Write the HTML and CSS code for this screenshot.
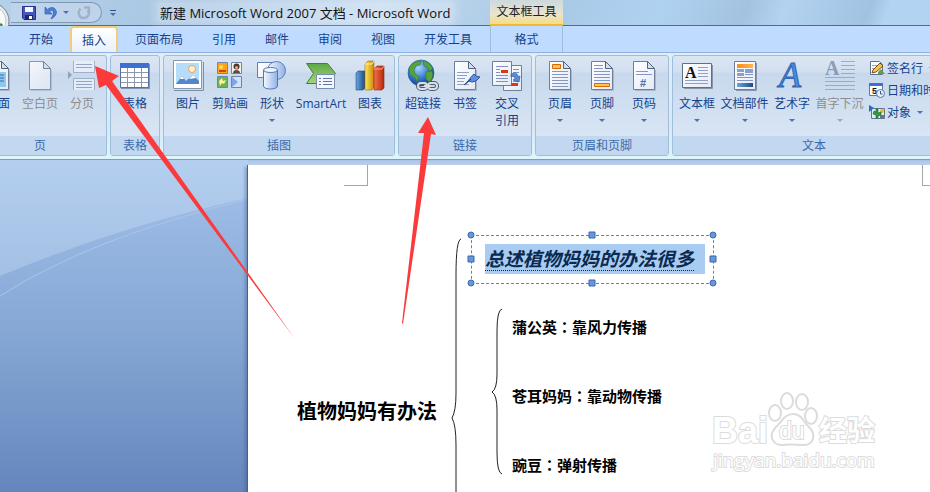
FILE: index.html
```html
<!DOCTYPE html>
<html lang="zh-CN">
  <head>
    <title>新建 Microsoft Word 2007 文档 - Microsoft Word</title>
    <meta charset="UTF-8">
    <meta name="viewport" content="width=device-width,initial-scale=1.0">
    <link rel="stylesheet" href="styles.css">
  </head>

  <body>
    <!-- shared gradients and page shapes for the ribbon icons -->
    <svg class="defs" width="0" height="0" aria-hidden="true">
      <defs>
        <linearGradient id="paper" x1="0" y1="0" x2="1" y2="1"><stop offset="0" stop-color="#fff"/><stop offset="1" stop-color="#e3e9f5"/></linearGradient>
        <linearGradient id="glass" x1="0" y1="0" x2="1" y2="0"><stop offset="0" stop-color="#f4f8ff"/><stop offset="1" stop-color="#8fb2e6"/></linearGradient>
        <linearGradient id="green" x1="0" y1="0" x2="0" y2="1"><stop offset="0" stop-color="#5da845"/><stop offset="1" stop-color="#a5d67c"/></linearGradient>
        <linearGradient id="gold" x1="0" y1="0" x2="1" y2="0"><stop offset="0" stop-color="#ffe65a"/><stop offset="1" stop-color="#c98a00"/></linearGradient>
        <linearGradient id="blue" x1="0" y1="0" x2="1" y2="0"><stop offset="0" stop-color="#6aa7e0"/><stop offset="1" stop-color="#1e4a85"/></linearGradient>
        <linearGradient id="red" x1="0" y1="0" x2="1" y2="0"><stop offset="0" stop-color="#f4704a"/><stop offset="1" stop-color="#b42a0c"/></linearGradient>
        <linearGradient id="orange" x1="0" y1="0" x2="1" y2="0"><stop offset="0" stop-color="#ff8a1c"/><stop offset="1" stop-color="#ffb74a"/></linearGradient>
        <radialGradient id="sea" cx=".4" cy=".3" r=".7"><stop offset="0" stop-color="#a9d8fb"/><stop offset=".6" stop-color="#3277d0"/><stop offset="1" stop-color="#123f8c"/></radialGradient>
        <symbol id="page" viewBox="0 0 32 32">
          <path d="M7 30.5h20.500V10" fill="none" stroke="#8fa0b8" opacity=".6"/>
          <path d="M5.500 1.500h14l7 7v21h-21z" fill="url(#paper)" stroke="#6d7f99"/>
          <path d="M19.500 1.500v7h7z" fill="#d4deee" stroke="#50627c"/>
        </symbol>
      </defs>
    </svg>

    <header class="header">
      <div class="titlebar">
        <svg class="orb" width="11" height="26" viewBox="0 0 11 26"><circle cx="-9" cy="21" r="18" fill="#e7ebef" stroke="#77828f"/><circle cx="-9" cy="21" r="15" fill="#f8f9fa" stroke="#c1c8d0"/><path d="M-2 24h4v7h-4z" fill="#5ca52e" stroke="#38761b"/></svg>
        <div class="qat">
          <button aria-label="保存"><svg width="14" height="14" viewBox="0 0 14 14"><path d="M.5.5h13v13H2L.5 12z" fill="#4557b8" stroke="#27318b"/><path d="M3 1h8v5H3z" fill="#f3f7ff"/><path d="M3 9h8v5H3z" fill="#20286c"/><path d="M7 10h3v3H7z" fill="#fff"/></svg></button>
          <button aria-label="撤消"><svg width="14" height="14" viewBox="0 0 14 14"><path d="M1 1v7h7L5.500 5.500C9 3 11 6 8 11l-1 2c6-3 7-8 3-11C7.500 1 5 2 3.500 3.500z" fill="#4c7fd6" stroke="#2f5fb5" stroke-width=".7"/></svg></button>
          <i class="caret"></i>
          <button class="redo" aria-label="恢复"><svg width="14" height="14" viewBox="0 0 14 14"><path d="M3.500 2.500C-.5 7 3 12.500 7 12c5-.5 6-5 3.500-8M7 1.500h5V7" fill="none" stroke="#94a5bc" stroke-width="2.400"/></svg></button>
        </div>
        <button class="more" aria-label="自定义快速访问工具栏"><i class="caret"></i></button>
        <div class="title">新建 Microsoft Word 2007 文档 - Microsoft Word</div>
      </div>
      <div class="context-title">文本框工具</div>
      <nav class="tabs">
        <button>开始</button>
        <button class="active">插入</button>
        <button>页面布局</button>
        <button>引用</button>
        <button>邮件</button>
        <button>审阅</button>
        <button>视图</button>
        <button>开发工具</button>
      </nav>
      <button class="context-tab">格式</button>
    </header>

    <main class="ribbon">
      <section class="group first">
        <div class="tools">
          <button class="tool"><svg width="32" height="32"><use href="#page"/><path d="M8 12h16v15H8z" fill="#8cc8f0"/><path d="M10 15h12M10 18h12M10 21h12" stroke="#3d6ea8"/></svg>封面</button>
          <button class="tool disabled" disabled><svg width="32" height="32"><use href="#page"/></svg>空白页</button>
          <button class="tool disabled" disabled><svg width="32" height="32"><path d="M2 11l4 4-4 4z" fill="#7e90ab"/><path d="M7.500 1v11.500h21V1M7.500 30V18.500h21V30" fill="#edf2fb" stroke="#8fa2bf"/><path d="M10 4.500h16M10 7.500h16M10 21.500h16M10 24.500h16M10 27.500h16" stroke="#8292bd"/></svg>分页</button>
        </div>
        <h2>页</h2>
      </section>

      <section class="group">
        <div class="tools">
          <button class="tool"><svg width="32" height="32"><path d="M2 4h29v25H2z" fill="#8396b5"/><path d="M1.500 3.500h28v24h-28z" fill="#fff" stroke="#56709e"/><path d="M1 3h29v5H1z" fill="#3f6fd1"/><path d="M2 12.500h27M2 17.500h27M2 22.500h27M8.500 8v19M15.500 8v19M22.500 8v19" stroke="#8b98ad"/></svg>表格</button>
        </div>
        <h2>表格</h2>
      </section>

      <section class="group">
        <div class="tools">
          <button class="tool"><svg width="32" height="32"><path d="M2 30.500h29.500V2" fill="none" stroke="#7d8da6"/><path d="M1.500.500h28v28h-28z" fill="#fff" stroke="#8597b1"/><path d="M4 3h23v21H4z" fill="#b5dcf8"/><circle cx="20" cy="9" r="3.500" fill="#fff2d0" stroke="#f5a04b"/><path d="M4 24l6-8 4 5 7-6 6 6v3z" fill="#5585c9"/><path d="M8 19l2-3 2 3zM17 19l4-4 3 3z" fill="#fff"/></svg>图片</button>
          <button class="tool"><svg width="32" height="32"><g stroke="#7185a8"><path d="M3.500 2.500h10v11h-10z" fill="#fba51d"/><path d="M17.500 2.500h10v11h-10z" fill="#f2f2f2"/><path d="M3.500 16.500h10v11h-10z" fill="#69b45b"/><path d="M17.500 16.500h10v11h-10z" fill="#d3e1fa"/></g><path d="M5 10h7v2H5z" fill="#d3420e"/><circle cx="7" cy="7" r="2" fill="#ffe15b"/><circle cx="22.500" cy="6.500" r="3" fill="#4c3528"/><circle cx="22.500" cy="7.500" r="1.500" fill="#e5b089"/><path d="M19 13c0-4 7-4 7 0z" fill="#4b4b4b"/><path d="M22 10l1 3 1-3z" fill="#c42"/><path d="M5 21l3-3 1 3 3-1-2 4-2-1-2 3z" fill="#fff39a"/><path d="M18 17l6 5-6 5z" fill="#7ea4e9"/></svg>剪贴画</button>
          <button class="tool"><svg width="32" height="32"><path d="M1.500 2.500h20v15h-20z" fill="url(#paper)" stroke="#5e7fb2"/><circle cx="20.500" cy="10.500" r="9" fill="url(#glass)" stroke="#5e7fb2"/><path d="M7.500 10v16c0 4 14 4 14 0V10" fill="url(#glass)" stroke="#5377b0"/><ellipse cx="14.500" cy="10" rx="7" ry="2.500" fill="#eef5ff" stroke="#5377b0"/></svg>形状<i class="caret"></i></button>
          <button class="tool smartart"><svg width="32" height="32"><path d="M1.500 3.500h21l8 10-8 10h-21l7-10z" fill="url(#green)" stroke="#3e8236"/><path d="M11.500 14.500h18v14h-18z" fill="#f3f6fd" stroke="#7a8dac"/><path d="M18 18.500h9M18 21.500h9M18 24.500h9M14 18.500h2M14 21.500h2M14 24.500h2" stroke="#6076a9"/></svg>SmartArt</button>
          <button class="tool"><svg width="32" height="32"><path d="M2 13l2-2h7v17l-2 2H2z" fill="url(#blue)" stroke="#204d80" stroke-width=".6"/><path d="M11 4l3-3h6v26l-2 3h-7z" fill="url(#gold)" stroke="#9b6c00" stroke-width=".6"/><path d="M20 9l3-3h7v22l-2 2h-8z" fill="url(#red)" stroke="#8c2208" stroke-width=".6"/><path d="M11 4h7l2-3" fill="none" stroke="#fff29a"/><path d="M20 9h8l2-3" fill="none" stroke="#ffa287"/></svg>图表</button>
        </div>
        <h2>插图</h2>
      </section>

      <section class="group">
        <div class="tools">
          <button class="tool"><svg width="32" height="32"><circle cx="14" cy="13" r="13" fill="url(#sea)" stroke="#26558f" stroke-width=".6"/><path d="M2 8c3-6 8-7 12-7l-1 4-4 1-2 4 1 4 4 3-2 5-2-4-5-4zM16 1c4 0 8 3 10 8l-4 2-2-4-3-1zM19 12l6-1c2 5 0 9-3 11l-3-3z" fill="#55a33c" stroke="#2c7233" stroke-width=".5"/><g fill="none" stroke="#4c5b6c" stroke-width="4"><rect x="11" y="23" width="9" height="6" rx="3"/><rect x="21" y="23" width="9" height="6" rx="3"/></g><g fill="none" stroke="#d9e0e9" stroke-width="2"><rect x="11" y="23" width="9" height="6" rx="3"/><rect x="21" y="23" width="9" height="6" rx="3"/><path d="M17 26h7"/></g></svg>超链接</button>
          <button class="tool"><svg width="32" height="32"><use href="#page"/><path d="M8 12.500h12M8 15.500h10M8 18.500h8M8 21.500h7M8 24.500h12" stroke="#8da0c8"/><path d="M16 24c5-4 5-7 9-10l2 2 4 1-4 4-4 1-3-1z" fill="#5e8fdd" stroke="#30569d"/><path d="M15 25l7-6" stroke="#233e70"/></svg>书签</button>
          <button class="tool"><svg width="32" height="32"><path d="M12.500 5.500h18v25h-18z" fill="url(#paper)" stroke="#6d7f99"/><path d="M22 9.500h6M22 12.500h6M22 21.500h6" stroke="#7d91c3"/><path d="M1.500 1.500h19v24h-19z" fill="url(#paper)" stroke="#6d7f99"/><path d="M5 6.500h12M5 9.500h4M5 12.500h4M5 15.500h12M5 18.500h12M5 21.500h12" stroke="#7d91c3"/><path d="M10 10h7v3h-7zM20 23h7v3h-7z" fill="#dc3912"/><path d="M20 14c5-2 7 0 7 3l2-1-1 6-6-2 2-1c0-3-2-3-4-2z" fill="#5a8be0" stroke="#2e5aa6" stroke-width=".7"/></svg>交叉<br>引用</button>
        </div>
        <h2>链接</h2>
      </section>

      <section class="group">
        <div class="tools">
          <button class="tool"><svg width="32" height="32"><use href="#page"/><path d="M8.500 4.500h8v4h-8z" fill="#ffc35a" stroke="#d96a00"/><path d="M8 11.500h16M8 14.500h16M8 17.500h16M8 20.500h16M8 23.500h16M8 26.500h16" stroke="#8496c7"/></svg>页眉<i class="caret"></i></button>
          <button class="tool"><svg width="32" height="32"><use href="#page"/><path d="M8 5.500h9M8 8.500h9M8 11.500h16M8 14.500h16M8 17.500h16M8 20.500h16" stroke="#8496c7"/><path d="M8.500 23.500h15v3h-15z" fill="#ffc35a" stroke="#d96a00"/></svg>页脚<i class="caret"></i></button>
          <button class="tool"><svg width="32" height="32"><use href="#page"/><path d="M8 11.500h12M8 14.500h16" stroke="#8496c7"/><text class="hash" x="12" y="27">#</text></svg>页码<i class="caret"></i></button>
        </div>
        <h2>页眉和页脚</h2>
      </section>

      <section class="group last">
        <div class="tools">
          <button class="tool"><svg width="32" height="32"><path d="M3 28.500h28.500V5" fill="none" stroke="#8796ad"/><path d="M1.500 3.500h29v24h-29z" fill="url(#paper)" stroke="#5d6f8a"/><text class="letter" x="4" y="18">A</text><path d="M17 7.500h10M17 10.500h10M17 13.500h10M17 16.500h10M4 20.500h23M4 23.500h23" stroke="#8fa1ca"/></svg>文本框<i class="caret"></i></button>
          <button class="tool wide"><svg width="32" height="32"><path d="M7 30.500h20.500V3" fill="none" stroke="#8796ad"/><path d="M5.500 1.500h21v28h-21z" fill="url(#paper)" stroke="#6d7f99"/><path d="M8 4h16v4H8z" fill="url(#orange)"/><path d="M8 9h7v3H8zM16 9h8v4h-8zM8 13h7v3H8z" fill="#8ba0cb"/><path d="M16 14.500h8M8 17.500h16M8 20.500h16" stroke="#8496c7"/><path d="M8 23h16v4H8z" fill="url(#blue)"/></svg>文档部件<i class="caret"></i></button>
          <button class="tool"><svg width="32" height="32"><text class="wordart" x="3" y="27">A</text></svg>艺术字<i class="caret"></i></button>
          <button class="tool wide disabled" disabled><svg width="32" height="32"><text class="dropcap" x="1" y="15">A</text><path d="M17 1.500h14M17 5.500h14M17 9.500h14M17 13.500h14M1 17.500h30M1 21.500h30M1 25.500h30M1 29.500h30" stroke="#8b9bb5"/></svg>首字下沉<i class="caret"></i></button>
          <div class="small-tools">
            <button><svg width="16" height="16"><path d="M1.500 1.500h9l3 3v10h-12z" fill="#fff" stroke="#62738e"/><path d="M3 5.500h6M3 8.500h4" stroke="#8ba0c5"/><path d="M4 10l7-7 3 3-7 6-4 1z" fill="#f1c453" stroke="#755118"/><path d="M9 12l3-3 4 5h-7z" fill="#6a9d42"/></svg>签名行<i class="caret"></i></button>
            <button><svg width="16" height="16"><path d="M.5 1.500h13v12H.5z" fill="#fff" stroke="#667995"/><path d="M0 1h14v3H0z" fill="#3e70d2"/><text class="date" x="3" y="12">5</text><circle cx="11.500" cy="11.500" r="4" fill="#e4effd" stroke="#587cad"/><path d="M11.500 9v3h2" fill="none" stroke="#365987"/></svg>日期和时间</button>
            <button><svg width="16" height="16"><path d="M2.500 4.500h13v10h-13z" fill="#dcecf8" stroke="#617790"/><path d="M0 1l5 3-5 4z" fill="#296ac4"/><circle cx="13" cy="7" r="2" fill="#f2b430"/><path d="M7 14v-3l-3-1 1-3 2 1V5h2v4l3-1v3l-3 1v2z" fill="#2f9d3b" stroke="#14672a" stroke-width=".6"/><path d="M11 11h4v3h-4z" fill="#6a7482"/></svg>对象<i class="caret"></i></button>
          </div>
        </div>
        <h2>文本</h2>
      </section>
    </main>

    <div class="workspace">
      <svg class="swoosh" width="248" height="332" viewBox="0 160 248 332">
        <defs>
          <linearGradient id="sky" x1="0" y1="0" x2="0" y2="1"><stop offset="0" stop-color="#b4cfef"/><stop offset="1" stop-color="#a3bfe3"/></linearGradient>
          <linearGradient id="deep" x1="0" y1="0" x2="0" y2="1"><stop offset="0" stop-color="#9dbce6"/><stop offset=".5" stop-color="#83a5d3"/><stop offset="1" stop-color="#6486bd"/></linearGradient>
        </defs>
        <path d="M0 160h248v120H0z" fill="url(#sky)"/>
        <path d="M0 276Q120 226 248 198V492H0z" fill="url(#deep)"/>
        <path d="M0 296Q90 238 248 199" fill="none" stroke="#a9c6ea"/>
      </svg>
      <article class="page">
        <i class="crop crop-left"></i>
        <i class="crop crop-right"></i>
        <svg class="braces" width="270" height="327" viewBox="248 165 270 327">
          <g fill="none" stroke="#222">
            <path d="M461 239q-5 1-5 36v118q0 18-4 25q4 7 4 27v60"/>
            <path d="M502 309q-5 1-5 22v43q0 15-5 18q5 3 5 18v42q0 21 5 22"/>
          </g>
        </svg>
        <h1 class="topic">植物妈妈有办法</h1>
        <div class="textbox">
          <span class="selected"><span>总述植物妈妈的办法很多</span></span>
          <svg class="handles" width="254" height="60">
            <g fill="#6796e0" stroke="#3e69a8"><circle cx="6" cy="6" r="3"/><circle cx="248" cy="6" r="3"/><circle cx="6" cy="54" r="3"/><circle cx="248" cy="54" r="3"/><path d="M124 3h6v6h-6zM124 51h6v6h-6zM3 27h6v6H3zM245 27h6v6h-6z"/></g>
          </svg>
        </div>
        <p class="point p1">蒲公英<span class="colon" lang="zh-TW">：</span>靠风力传播</p>
        <p class="point p2">苍耳妈妈<span class="colon" lang="zh-TW">：</span>靠动物传播</p>
        <p class="point p3">豌豆<span class="colon" lang="zh-TW">：</span>弹射传播</p>
        <svg class="watermark" width="180" height="90" viewBox="705 385 180 90">
          <g class="outline">
            <text class="wm-bai" x="712" y="443">Bai</text>
            <ellipse cx="775" cy="413" rx="6" ry="8"/><ellipse cx="787" cy="401" rx="6" ry="8"/><ellipse cx="802" cy="402" rx="6" ry="8"/><ellipse cx="811" cy="416" rx="6" ry="8"/>
            <path d="M793 414c9 0 10 8 16 13 8 8 4 18-5 18-8 0-14-1-22 0-10 0-14-10-6-18 6-5 8-13 17-13z"/>
            <text class="wm-du" x="779" y="439">du</text>
            <text class="wm-cn" x="819" y="441">经验</text>
            <text class="wm-url" x="713" y="467">jingyan.baidu.com</text>
          </g>
        </svg>
      </article>
    </div>

    <svg class="arrows" width="930" height="492" aria-hidden="true">
      <path d="M95 66L119 76L112 81L295 339L106 85L99 88Z"/>
      <path d="M428 117L436 135L431 134L403 324L402 323L424 133L418 133Z"/>
    </svg>
  </body>
</html>
```
FILE: styles.css
```css
* {
  box-sizing: border-box;
}

body {
  margin: 0;
  position: relative;
  min-height: 100vh;
  display: flex;
  flex-direction: column;
  overflow: hidden;
  font-family: "Open Sans", "Noto Sans CJK SC", sans-serif;
  font-size: 12px;
  color: #15428b;
  background: #bfdbff;
}

button {
  font: inherit;
  color: inherit;
  background: none;
  border: 0;
  padding: 0;
  cursor: pointer;
}

h1, h2, p {
  margin: 0;
}

.defs {
  position: absolute;
}

.caret {
  width: 0;
  height: 0;
  border: 3px solid transparent;
  border-top-color: #4a74ad;
  border-bottom: 0;
}

/* title bar and tabs */
.header {
  display: grid;
  grid-template-columns: auto 73px 1fr;
  grid-template-rows: 26px 26px;
  background: linear-gradient(#bfdbff, #bfdbff) 0 26px no-repeat,
    linear-gradient(110deg, #b4d0eb 0, #a9c6e2 20%, #c4daef 40%, #a8c8e5 58%, #b0d2f1 70%, #a3c2e0 79%, #b3d3f1 83%, #a2c2e2 92%, #b2d3f2 94%);
}

.titlebar {
  grid-row: 1;
  grid-column: 1 / 2;
  display: flex;
  align-items: center;
  height: 26px;
  border-bottom: 1px solid #566a80;
}

.header::after {
  content: "";
  grid-row: 1;
  grid-column: 3;
  border-bottom: 1px solid #566a80;
}

.orb {
  flex: none;
}

.qat {
  display: flex;
  align-items: center;
  gap: 8px;
  width: 91px;
  height: 21px;
  padding-left: 11px;
  border: 1px solid #8097b2;
  border-left: 0;
  border-radius: 0 11px 11px 0;
  background: #bfd4ea;
}

.qat button {
  height: 14px;
}

.qat svg {
  display: block;
}

.qat .caret {
  margin: 0 0 0 -3px;
}

.redo {
  opacity: .7;
}

.more {
  display: flex;
  margin-left: 8px;
  padding-top: 2px;
  border-top: 1px solid #31547f;
}

.title {
  margin-left: 42px;
  padding: 0 2px;
  font-size: 13px;
  color: #111;
  white-space: nowrap;
  background: rgba(255, 255, 255, .25);
  box-shadow: 0 0 8px 4px rgba(255, 255, 255, .25);
}

.context-title {
  line-height: 24px;
  text-align: center;
  color: #222;
  background: linear-gradient(#cdd9df, #e9e5cd 60%, #f5dc86);
  border-bottom: 2px solid #f3b92c;
}

.tabs {
  display: flex;
  gap: 5px;
  padding: 0 6px 0 17px;
}

.tabs button {
  padding: 0 12px;
  white-space: nowrap;
}

.tabs .active {
  background: linear-gradient(#fff, #e7f0fa);
  border: 2px solid #f1cd75;
  border-bottom: 0;
  border-radius: 4px 4px 0 0;
  padding: 0 10px;
}

.context-tab {
  border: solid #a3bddd;
  border-width: 0 1px;
}

/* ribbon */
.ribbon {
  display: flex;
  gap: 3px;
  height: 108px;
  padding: 2px 0 3px;
  background: linear-gradient(#e3edf8, #d9e8f7 70%, #def5fb);
  border-top: 1px solid #8db2e3;
  border-bottom: 1px solid #7e9cc0;
}

.group {
  flex: none;
  display: flex;
  flex-direction: column;
  justify-content: space-between;
  border: 1px solid #9dbfdb;
  border-radius: 3px;
  background: linear-gradient(#dbe6f4 0, #d2dfef 16px, #c8d9ed 17px, #d8e5f4 80px);
}

.group h2 {
  height: 19px;
  line-height: 19px;
  font-size: 12px;
  font-weight: normal;
  text-align: center;
  color: #3e6aaa;
  background: #c2d8f0;
}

.tools {
  display: flex;
  padding: 4px 3px 0;
}

.first {
  width: 107px;
  border-left: 0;
  border-radius: 0 3px 3px 0;
  overflow: hidden;
}

.first .tools {
  justify-content: flex-end;
}

.first h2 {
  padding-right: 26px;
}

.last {
  min-width: 284px;
}

.tool {
  flex: none;
  display: flex;
  flex-direction: column;
  align-items: center;
  min-width: 42px;
  padding: 0 2px;
  line-height: 17px;
  white-space: nowrap;
}

.wide {
  min-width: 53px;
}

.smartart {
  min-width: 56px;
}

.tool svg {
  flex: none;
  margin-bottom: 3px;
  overflow: visible;
}

.tool .caret {
  margin-top: 7px;
}

.disabled {
  color: #8d8d8d;
}

.disabled svg {
  opacity: .75;
}

.disabled .caret {
  border-top-color: #a5a5a5;
}

.small-tools {
  display: flex;
  flex-direction: column;
  margin: -3px 0 0 3px;
}

.small-tools button {
  display: flex;
  align-items: center;
  gap: 2px;
  height: 22px;
  white-space: nowrap;
}

.small-tools .caret {
  margin-left: 4px;
}

.hash {
  font: bold 11px "Liberation Sans", sans-serif;
  fill: #4e70a8;
}

.letter {
  font: bold 16px "Liberation Serif", serif;
  fill: #111;
}

.wordart {
  font: italic 36px "Liberation Serif", serif;
  fill: #4a8ce0;
  stroke: #2f64b0;
}

.dropcap {
  font: bold 20px "Liberation Serif", serif;
  fill: #7285a5;
}

.date {
  font: bold 9px "Liberation Sans", sans-serif;
  fill: #111;
}

/* document area */
.workspace {
  position: relative;
  flex: 1;
  display: flex;
  padding: 5px 0 0 248px;
  background: linear-gradient(#a9c2e4, #bdd3f0 5px);
}

.swoosh {
  position: absolute;
  left: 0;
  top: 0;
}

.page {
  position: relative;
  flex: 1;
  color: #000;
  background: #fff;
  box-shadow: -1px 0 #4f607b, -3px 2px 3px rgba(50, 80, 130, .4);
}

.crop {
  position: absolute;
  top: 0;
  width: 24px;
  height: 21px;
  border: 0 solid #a6a6a6;
  border-bottom-width: 1px;
}

.crop-left {
  left: 96px;
  border-right-width: 1px;
}

.crop-right {
  right: 0;
  width: 8px;
  border-left-width: 1px;
}

.braces {
  position: absolute;
  left: 0;
  top: 0;
}

.topic {
  position: absolute;
  left: 49px;
  top: 232px;
  font-size: 20px;
  line-height: 30px;
  font-weight: bold;
  white-space: nowrap;
}

.textbox {
  position: absolute;
  left: 223px;
  top: 70px;
  width: 243px;
  height: 49px;
  padding: 8px 8px 9px 13px;
  border: 1px dashed #4f86d6;
}

.selected {
  display: block;
  height: 30px;
  line-height: 30px;
  font-size: 19px;
  font-weight: bold;
  font-style: italic;
  white-space: nowrap;
  color: #0b2a50;
  background: #a9cdf2;
}

.selected span {
  display: inline-block;
  height: 27px;
  border-bottom: 1px dotted #0b2a50;
}

.handles {
  position: absolute;
  left: -7px;
  top: -7px;
}

.point {
  position: absolute;
  left: 264px;
  font-size: 15px;
  line-height: 22px;
  font-weight: bold;
  white-space: nowrap;
}

.colon {
  font-family: "Noto Sans CJK TC", sans-serif;
}

.p1 {
  top: 151px;
}

.p2 {
  top: 220px;
}

.p3 {
  top: 289px;
}

.watermark {
  position: absolute;
  left: 457px;
  top: 220px;
}

.outline {
  fill: #fff;
  stroke: #dcdcdc;
  stroke-width: 2px;
}

.outline text {
  paint-order: stroke;
}

.wm-bai {
  font: bold 36px "Liberation Sans", sans-serif;
}

.wm-du {
  font: 23px "Liberation Sans", sans-serif;
}

.wm-cn {
  font: bold 28px "Noto Sans CJK SC", sans-serif;
}

.wm-url {
  font: 19px "Open Sans", sans-serif;
}

.arrows {
  position: absolute;
  left: 0;
  top: 0;
  fill: #fb3b3b;
  pointer-events: none;
}
```
